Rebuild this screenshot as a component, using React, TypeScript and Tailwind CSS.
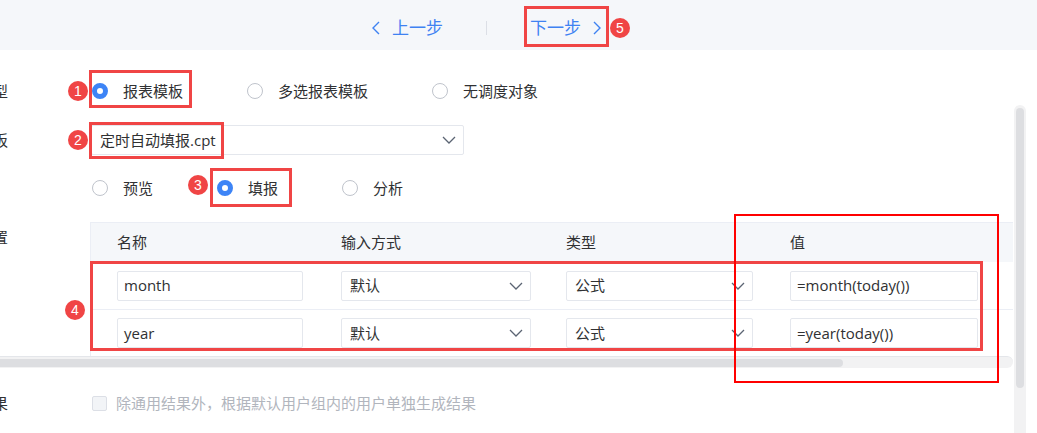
const FONT = "font-['Open_Sans','Noto_Sans_CJK_SC',sans-serif]";

function ChevronDown() {
  return (
    <svg width="14" height="8" viewBox="0 0 14 8" fill="none" className="shrink-0">
      <path d="M1 1l6 6 6-6" stroke="#5b6473" strokeWidth="1.3" />
    </svg>
  );
}

function Radio({ checked, label }: { checked?: boolean; label: string }) {
  return (
    <label className="flex items-center gap-[15px]">
      <span
        className={
          checked
            ? "w-4 h-4 rounded-full border-[5px] border-[#3d84f6] bg-white"
            : "w-4 h-4 rounded-full border border-[#c0c4cc] bg-white"
        }
      />
      <span className="text-[15px] leading-5 text-[#303133]">{label}</span>
    </label>
  );
}

function Label({ text }: { text: string }) {
  return (
    <div className="w-[8px] shrink-0 flex justify-end overflow-hidden whitespace-nowrap text-[15px] leading-5 text-[#303133]">
      {text}
    </div>
  );
}

function Input({ value, width }: { value: string; width: string }) {
  return (
    <div
      className={`${width} h-[30px] flex items-center pl-[6px] border border-[#e4e7ed] rounded-[2px] bg-white text-[15px] text-[#303133]`}
    >
      {value}
    </div>
  );
}

function Select({ value, width }: { value: string; width: string }) {
  return (
    <div
      className={`${width} h-[30px] flex items-center justify-between pl-[8px] pr-[7px] border border-[#e4e7ed] rounded-[2px] bg-white text-[15px] text-[#303133]`}
    >
      <span>{value}</span>
      <ChevronDown />
    </div>
  );
}

function Badge({ n, x, y }: { n: number; x: string; y: string }) {
  return (
    <span
      className={`absolute ${x} ${y} w-5 h-5 rounded-full bg-[#f04545] text-white text-[14px] font-['Liberation_Sans',sans-serif] flex items-center justify-center`}
    >
      {n}
    </span>
  );
}

const rows = [
  { name: "month", value: "=month(today())" },
  { name: "year", value: "=year(today())" },
];

export default function App() {
  return (
    <div className={`relative w-[1037px] h-[433px] overflow-hidden bg-white ${FONT}`}>
      {/* step bar */}
      <div className="h-[50px] pt-[6px] pl-[372px] flex items-center bg-[#f5f7fa] text-[17px] text-[#3f82f2]">
        <svg width="8" height="14" viewBox="0 0 8 14" fill="none">
          <path d="M7 1L1 7l6 6" stroke="#3f82f2" strokeWidth="1.4" />
        </svg>
        <span className="ml-[12px]">上一步</span>
        <span className="ml-[43px] w-px h-[14px] bg-[#dcdfe6]" />
        <span className="ml-[43px]">下一步</span>
        <svg width="8" height="14" viewBox="0 0 8 14" fill="none" className="ml-[12px]">
          <path d="M1 1l6 6-6 6" stroke="#3f82f2" strokeWidth="1.4" />
        </svg>
      </div>

      {/* scrollable form */}
      <div className="w-[1013px]">
        <div className="pt-4">
          <div className="h-[50px] flex items-center">
            <Label text="调度类型" />
            <div className="ml-[84px] flex items-center gap-[64px]">
              <Radio checked label="报表模板" />
              <Radio label="多选报表模板" />
              <Radio label="无调度对象" />
            </div>
          </div>

          <div className="h-[48px] flex items-center">
            <Label text="报表模板" />
            <div className="ml-[83px] w-[373px] h-[30px] flex items-center justify-between pl-[8px] pr-[7px] border border-[#e4e7ed] rounded-[2px] text-[15px] text-[#303133]">
              <span>定时自动填报.cpt</span>
              <ChevronDown />
            </div>
          </div>

          <div className="h-[48px] flex items-center">
            <div className="w-[8px] shrink-0" />
            <div className="ml-[84px] flex items-center gap-[64px]">
              <Radio label="预览" />
              <Radio checked label="填报" />
              <Radio label="分析" />
            </div>
          </div>

          <div className="mt-[10px] flex items-start">
            <div className="mt-[5px]">
              <Label text="参数设置" />
            </div>
            <div className="ml-[82px] flex-1 border-l border-t border-[#ebeef5] text-[15px] text-[#303133]">
              <div className="h-[39px] grid grid-cols-[224px_225px_224px_1fr] items-center bg-[#f5f7fa]">
                <span className="pl-[26px]">名称</span>
                <span className="pl-[26px]">输入方式</span>
                <span className="pl-[26px]">类型</span>
                <span className="pl-[26px]">值</span>
              </div>
              {rows.map((r, i) => (
                <div
                  key={r.name}
                  className={`grid grid-cols-[224px_225px_224px_1fr] items-center ${
                    i === 0 ? "h-[47px]" : "h-[47px] border-t border-[#ebeef5]"
                  }`}
                >
                  <div className="pl-[26px]">
                    <Input value={r.name} width="w-[186px]" />
                  </div>
                  <div className="pl-[26px]">
                    <Select value="默认" width="w-[190px]" />
                  </div>
                  <div className="pl-[26px]">
                    <Select value="公式" width="w-[187px]" />
                  </div>
                  <div className="pl-[26px]">
                    <Input value={r.value} width="w-[188px]" />
                  </div>
                </div>
              ))}
            </div>
          </div>
        </div>

        {/* horizontal scrollbar */}
        <div className="h-[12px] border-t border-[#e4e6ea] bg-[#f2f2f3] rounded-r-full flex items-center">
          <div className="w-[843px] h-[8px] rounded-r-full bg-[#dddee1]" />
        </div>
      </div>

      <div className="h-[70px] flex items-center">
        <Label text="生成结果" />
        <span className="ml-[84px] w-[15px] h-[15px] border border-[#dcdfe6] bg-[#f2f4f7] rounded-[2px]" />
        <span className="ml-[9px] text-[15px] text-[#b1b5bd]">
          除通用结果外，根据默认用户组内的用户单独生成结果
        </span>
      </div>

      {/* vertical scrollbar */}
      <div className="absolute left-[1014px] top-[105px] bottom-0 w-[12px] bg-[#f2f2f3] rounded-t-full">
        <div className="absolute left-[2px] top-[3px] w-[8px] h-[280px] rounded-full bg-[#dddee1]" />
      </div>

      {/* annotations */}
      <span className="absolute left-[524px] top-[6px] w-[85px] h-[41px] border-[3px] border-[#f04545]" />
      <span className="absolute left-[89px] top-[70px] w-[103px] h-[38px] border-[3px] border-[#f04545]" />
      <span className="absolute left-[89px] top-[122px] w-[135px] h-[37px] border-[3px] border-[#f04545]" />
      <span className="absolute left-[210px] top-[168px] w-[82px] h-[39px] border-[3px] border-[#f04545]" />
      <span className="absolute left-[90px] top-[261px] w-[893px] h-[90px] border-[3px] border-[#f04545]" />
      <span className="absolute left-[734px] top-[214px] w-[265px] h-[169px] border-2 border-[#ff0000]" />
      <Badge n={5} x="left-[610px]" y="top-[18px]" />
      <Badge n={1} x="left-[68px]" y="top-[81px]" />
      <Badge n={2} x="left-[68px]" y="top-[130px]" />
      <Badge n={3} x="left-[188px]" y="top-[175px]" />
      <Badge n={4} x="left-[65px]" y="top-[300px]" />
    </div>
  );
}
